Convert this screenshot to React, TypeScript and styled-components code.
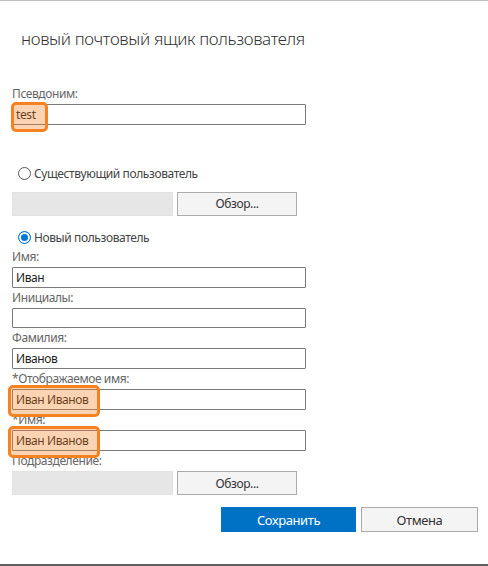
import styled, { createGlobalStyle } from "styled-components";

const GlobalStyle = createGlobalStyle`
  html, body {
    margin: 0;
    padding: 0;
    background: #ffffff;
  }

  body {
    font-family: "Noto Sans", "Open Sans", sans-serif;
    letter-spacing: -0.4px;
  }
`;

const Dialog = styled.div`
  width: 488px;
  height: 566px;
  box-sizing: border-box;
  border-top: 1px solid #bfbfbf;
  border-bottom: 2px solid #5e5e5e;
  display: flex;
  flex-direction: column;
  background: #ffffff;
`;

const Header = styled.div`
  height: 70px;
  flex-shrink: 0;
  box-sizing: border-box;
  padding: 26px 0 0 21px;
  font-size: 17px;
  font-weight: 300;
  color: #333333;
  letter-spacing: -0.35px;
`;

const Body = styled.div`
  height: 424px;
  flex-shrink: 0;
  overflow: hidden;
  box-sizing: border-box;
  padding: 13px 0 0 12px;
  display: flex;
  flex-direction: column;
`;

const Label = styled.div`
  height: 20px;
  line-height: 20px;
  font-size: 12px;
  color: #666666;
  white-space: nowrap;
`;

const InputBox = styled.div`
  position: relative;
  width: 294px;
  height: 21px;
  box-sizing: border-box;
  border: 1px solid #7a7a7a;
  border-radius: 1px;
  padding: 0 3px;
  font-size: 12px;
  line-height: 19px;
  color: #1e1e1e;
`;

const Highlight = styled.span<{ $w: number; $h: number; $l: number; $t: number }>`
  position: absolute;
  left: ${(p) => p.$l}px;
  top: ${(p) => p.$t}px;
  width: ${(p) => p.$w}px;
  height: ${(p) => p.$h}px;
  box-sizing: border-box;
  border: 3px solid #f58220;
  border-radius: 5px;
  background: rgba(245, 130, 32, 0.34);
  pointer-events: none;
`;

const RadioRow = styled.label<{ $mt: number }>`
  display: flex;
  align-items: center;
  height: 20px;
  margin-top: ${(p) => p.$mt}px;
  padding-left: 6px;
  font-size: 12px;
  color: #444444;
  gap: 3px;
`;

const RadioDot = styled.span<{ $checked: boolean }>`
  width: 13px;
  height: 13px;
  box-sizing: border-box;
  border-radius: 50%;
  border: 1px solid ${(p) => (p.$checked ? "#0078d7" : "#555555")};
  background: ${(p) => (p.$checked ? "#0078d7" : "#ffffff")};
  box-shadow: ${(p) => (p.$checked ? "inset 0 0 0 2px #ffffff" : "none")};
`;

const PickerRow = styled.div<{ $mt: number }>`
  display: flex;
  gap: 4px;
  margin-top: ${(p) => p.$mt}px;
`;

const DisabledBox = styled.div`
  width: 161px;
  height: 24px;
  box-sizing: border-box;
  background: #e6e6e6;
  border: 1px solid #e2e2e2;
`;

const BrowseButton = styled.button`
  width: 120px;
  height: 24px;
  box-sizing: border-box;
  background: #f4f4f4;
  border: 1px solid #ababab;
  border-radius: 0;
  font-family: inherit;
  letter-spacing: inherit;
  font-size: 12px;
  color: #333333;
  padding: 0;
`;

const Footer = styled.div`
  flex: 1;
  display: flex;
  justify-content: flex-end;
  align-items: flex-start;
  gap: 5px;
  padding: 12px 10px 0 0;
`;

const ActionButton = styled.button<{ $primary?: boolean; $w: number }>`
  width: ${(p) => p.$w}px;
  height: 25px;
  box-sizing: border-box;
  border-radius: 0;
  font-family: inherit;
  letter-spacing: inherit;
  font-size: 13px;
  padding: 0;
  background: ${(p) => (p.$primary ? "#0072c6" : "#f4f4f4")};
  color: ${(p) => (p.$primary ? "#ffffff" : "#333333")};
  border: 1px solid ${(p) => (p.$primary ? "#0072c6" : "#ababab")};
`;

type FieldProps = {
  label: string;
  value?: string;
  mark?: { w: number; h: number; l: number; t: number };
};

const Field = ({ label, value, mark }: FieldProps) => (
  <>
    <Label>{label}</Label>
    <InputBox>
      {mark && <Highlight $w={mark.w} $h={mark.h} $l={mark.l} $t={mark.t} />}
      {value}
    </InputBox>
  </>
);

const nameMark = { w: 92, h: 32, l: -5, t: -5 };

export default function App() {
  return (
    <>
      <GlobalStyle />
      <Dialog>
        <Header>новый почтовый ящик пользователя</Header>
        <Body>
          <Field label="Псевдоним:" value="test" mark={{ w: 37, h: 30, l: -2, t: -3 }} />

          <RadioRow $mt={39}>
            <RadioDot $checked={false} />
            Существующий пользователь
          </RadioRow>
          <PickerRow $mt={9}>
            <DisabledBox />
            <BrowseButton>Обзор...</BrowseButton>
          </PickerRow>

          <RadioRow $mt={12}>
            <RadioDot $checked={true} />
            Новый пользователь
          </RadioRow>

          <Field label="Имя:" value="Иван" />
          <Field label="Инициалы:" />
          <Field label="Фамилия:" value="Иванов" />
          <Field label="*Отображаемое имя:" value="Иван Иванов" mark={nameMark} />
          <Field label="*Имя:" value="Иван Иванов" mark={nameMark} />

          <Label>Подразделение:</Label>
          <PickerRow $mt={0}>
            <DisabledBox />
            <BrowseButton>Обзор...</BrowseButton>
          </PickerRow>
        </Body>
        <Footer>
          <ActionButton $primary $w={135}>
            Сохранить
          </ActionButton>
          <ActionButton $w={117}>Отмена</ActionButton>
        </Footer>
      </Dialog>
    </>
  );
}
